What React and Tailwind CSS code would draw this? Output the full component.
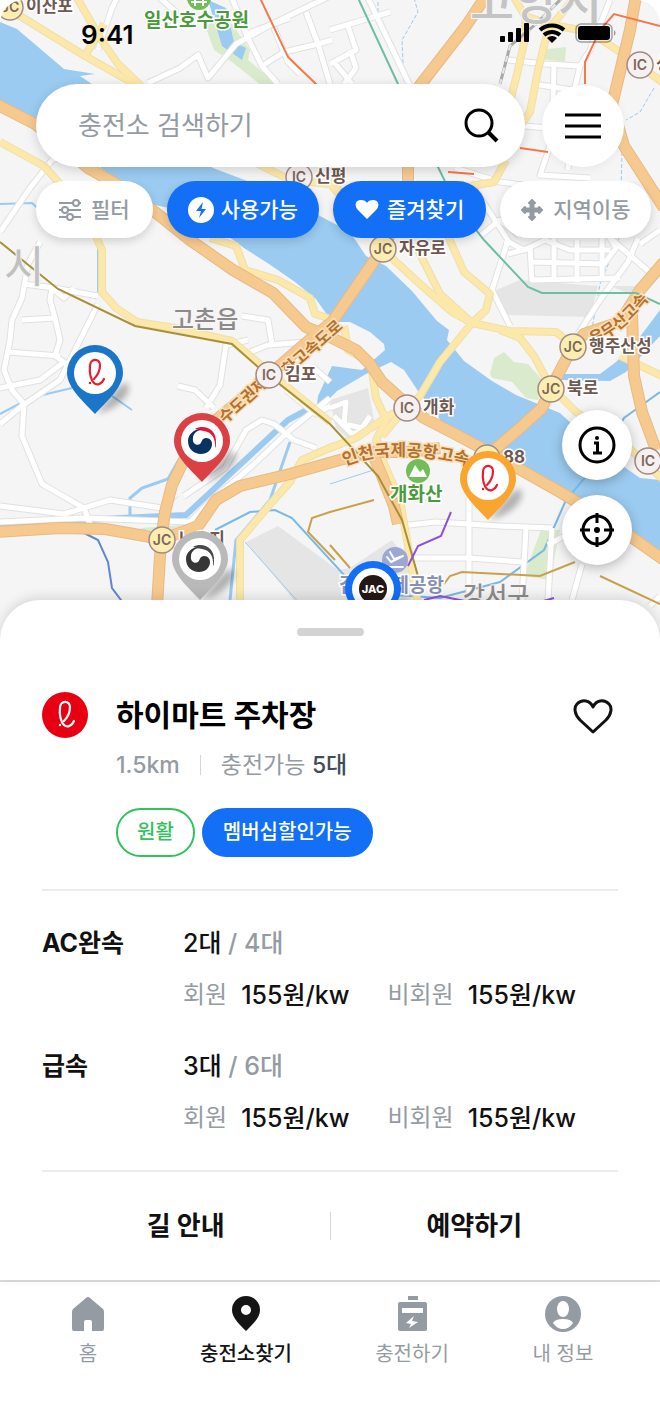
import { useState } from "react";

const ROADS = {
    // local streets
    white: [
        "M148 83 L180 68 L198 55 L208 78 L236 44 L270 25 L330 -4",
        "M160 -2 L176 12 L172 30", "M98 50 L112 8 L118 -4",
        "M232 -2 L246 34 L262 66 L278 84", "M262 66 L284 52 L318 44 L332 40",
        "M246 34 L290 18", "M274 28 L288 62 L300 74", "M306 12 L318 44 L330 84",
        "M330 30 L390 12", "M330 64 L356 50 L348 26", "M334 62 L352 84",
        "M350 50 L356 68 L344 84",
        "M367 -4 L412 90",
        "M508 60 L545 64 L580 66", "M554 66 L552 140 L540 175 L590 178", "M580 66 L572 100 L568 170",
        "M534 84 L572 90", "M525 126 L548 128", "M610 0 L590 50 L580 66",
        "M0 232 L30 188 L52 160", "M52 160 L62 156",
        "M455 168 L500 182 L530 186 L562 206", "M470 182 L508 240 L492 290 L510 326",
        "M505 240 L524 250 L545 240 L570 250 L610 250", "M508 254 L530 248 L532 280 L620 278",
        "M554 232 L554 282", "M577 240 L577 282", "M602 236 L602 280", "M532 262 L604 264 L616 248 L610 238 L654 276",
        "M638 238 L628 262 L600 300 L578 334", "M640 244 L660 230", "M480 236 L500 220 L520 236",
        "M40 242 L28 264 L22 298 L12 320 L10 340 L4 370 L12 390 L24 404 L22 436 L42 484 L84 508 L90 524",
        "M22 320 L55 318 L50 300 L52 288 L64 298 L74 288", "M24 284 L54 288 L98 296",
        "M55 318 L60 340 L55 356 L70 366", "M8 352 L60 356",
        "M98 304 L60 380 L22 406 L0 424", "M0 388 L40 380 L64 362",
        "M0 506 L64 514 L110 500 L162 508 L176 494", "M0 522 L84 518 L190 522 L212 500 L252 466 L290 430 L330 398",
        "M178 386 L195 390 L214 408", "M242 316 L268 320 L272 344",
        "M248 340 L226 345 L220 385 L206 408", "M184 496 L225 468 L246 430 L262 420 L274 424 L294 440 L316 448",
        "M250 352 L268 345 L306 342 L312 330", "M312 366 L330 382", "M286 390 L316 414 L330 406",
        "M330 408 L346 402 L344 424 L362 428 L370 416", "M334 416 L352 434 L366 430",
        "M400 526 L436 522 L500 526 L552 528", "M469 498 L469 600", "M412 558 L469 558 L522 562",
        "M526 528 L522 600", "M552 528 L548 600", "M548 545 L575 530", "M582 564 L572 600", "M650 606 L660 596",
    ],
    yellow: [
        "M0 8 L20 16 L85 56 L145 90", "M76 -4 L100 38 L118 64 L145 90", "M85 56 L104 24",
        "M0 142 L44 166 L60 184", "M94 232 L102 250 L102 292 L116 308 L137 322 L175 328 L232 341 L262 366 L330 422",
        "M258 164 L290 180 L330 184 L350 206", "M210 238 L236 246 L245 270 L278 280 L310 298 L315 314 L334 320",
        "M330 180 L372 225 L383 250 L420 284 L452 312 L472 323 L510 331 L556 332 L574 346",
        "M416 246 L440 294 L472 323", "M448 236 L464 272 L490 294 L486 310 L472 323 L440 362 L420 396 L404 410 L382 436",
        "M500 330 L520 338 L534 356 L550 386 L576 412 L620 440 L666 482",
        "M512 -6 L525 16 L526 34 L518 70 L508 110 L506 130", "M576 -4 L548 30 L538 70 L530 112 L520 126",
        "M525 16 L548 24 L590 32 L620 52", "M640 66 L662 82", "M506 160 L494 182 L470 186",
        "M334 446 L302 460 L290 482 L272 502 L240 540 L240 604", "M372 372 L376 398 L386 420 L376 440 L384 452",
        "M330 448 L356 438 L388 416 L404 408", "M376 440 L378 450 L400 500 L418 604",
        "M344 326 L348 350 L362 358", "M620 356 L662 376",
    ],
    orange: [
        "M-4 104 L35 124 L88 168 L120 186 L155 212 L190 240 L233 270 L273 293 L306 327 L330 337 L356 350 L370 364 L382 382 L402 400 L424 418 L455 434 L500 458 L560 492 L610 522 L664 560",
        "M486 -4 L466 26 L418 88", "M408 160 L408 200 L383 248 L332 322 L300 348 L240 400 L204 430 L184 460 L172 485 L165 512 L161 540 L157 606",
        "M636 -4 L630 30 L618 80 L612 105 L624 146 L664 208",
        "M-4 532 L60 528 L105 529 L145 536 L161 540 L198 526 L216 500 L240 486 L290 474 L336 461 L370 452 L410 452 L440 448",
        "M487 456 L520 428 L542 408 L552 386 L572 348 L584 334 L620 322 L640 290 L664 262",
        "M632 314 L634 376 L642 412 L656 450", "M372 452 L382 476 L394 506 L398 524",
    ],
};

const ROAD_STYLE = {
    white: { casing: "#e1e1e2", fill: "#ffffff", width: 5 },
    yellow: { casing: "#f0dfac", fill: "#fce8a9", width: 6 },
    orange: { casing: "#e8b985", fill: "#f6ca8f", width: 10 },
};

const JUNCTIONS = [
    { x: 10, y: 7, kind: "JC", label: "이산포" },
    { x: 299, y: 177, kind: "IC", label: "신평" },
    { x: 383, y: 249, kind: "JC", label: "자유로" },
    { x: 640, y: 65, kind: "IC", label: "성" },
    { x: 269, y: 375, kind: "IC", label: "김포" },
    { x: 573, y: 347, kind: "JC", label: "행주산성" },
    { x: 551, y: 389, kind: "JC", label: "북로" },
    { x: 407, y: 408, kind: "IC", label: "개화" },
    { x: 487, y: 458, kind: "JC", label: "88" },
    { x: 648, y: 461, kind: "IC", label: "" },
    { x: 162, y: 540, kind: "JC", label: "노오지" },
];

const CHARGERS = [
    { id: "ac", name: "AC완속", free: "2대", total: "4대", member: "155원/kw", guest: "155원/kw" },
    { id: "dc", name: "급속", free: "3대", total: "6대", member: "155원/kw", guest: "155원/kw" },
];

const LotteMark = ({ color }) => (
    <g fill="none" stroke={color} strokeLinecap="round">
        <path d="M-1 6 C4 1 5 -4 5 -8 C5 -15 -5 -15 -5 -7 C-6 0 -4 7 -1 10 C2 13 7 11 9 6" strokeWidth="2.2" />
        <circle cx="-5" cy="10" r="0.6" strokeWidth="1.2" />
    </g>
);

const GovMark = ({ top, bottom }) => (
    <g>
        <path d="M-7 -12 C2 -17 15 -12 14 2 C14 4 14 6 13 7 C14 -2 10 -9 2 -10 C-2 -11 -5 -11 -7 -12Z" fill={top} />
        <path d="M-1 -11 C-5 -13 -14 -8 -14 0 C-14 8 -8 13 -1 13 C5 13 10 9 10 3 C10 0 8 -3 4 -3 C0 -3 0 1 -2 3 C-5 5 -10 3 -9 -3 C-9 -7 -5 -11 -1 -11Z" fill={bottom} />
    </g>
);

const Pin = ({ x, y, color, children }) => (
    <g transform={`translate(${x} ${y})`}>
        <path d="M2 40 C12 28 24 10 32 10 C40 20 20 38 2 40Z" fill="#000" opacity="0.28" filter="url(#pinShadow)" />
        <path d="M0 41 C-9 31 -28 15 -28 0 A28 28 0 0 1 28 0 C28 15 9 31 0 41Z" fill={color} />
        <circle r="21" fill="#fff" />
        {children}
    </g>
);

const StationMap = () => (
    <svg
        className="absolute inset-0 h-full w-full"
        viewBox="0 0 660 640"
        preserveAspectRatio="xMidYMin slice"
        fontFamily='Inter, "Noto Sans CJK KR", sans-serif'
        role="img"
        aria-label="충전소 지도"
    >
        <defs>
            <filter id="pinShadow" x="-30%" y="-30%" width="160%" height="160%">
                <feGaussianBlur stdDeviation="3" />
            </filter>
            <path id="airportWay" d="M345 466 Q390 446 470 466" />
            <path id="mountainWay" d="M592 344 Q622 336 656 290" />
        </defs>
        <rect width="660" height="640" fill="#f5f5f5" />

        {/* grey blocks and parks */}
        <g fill="#e5e5e5">
            <path d="M496 290 L520 280 L598 286 L590 317 L506 315Z" />
            <path d="M246 542 L278 526 L338 570 L350 568 L392 540 L408 560 L412 604 L297 604Z" />
            <path d="M330 400 L368 388 L376 430 L350 440 L336 428Z" />
            <path d="M610 286 L650 286 L630 294Z" />
        </g>
        <g fill="#d9ebcc">
            <path d="M206 28 L214 16 L232 24 L250 50 L248 60 L280 86 L262 86 L232 62 L214 50Z" />
            <path d="M490 374 L494 358 L504 352 L514 362 L528 364 L546 384 L538 400 L526 398 L512 382 L492 378Z" />
            <path d="M541 530 L560 530 L550 580 L524 576Z" />
            <path d="M540 50 L566 47 L565 62 L542 59Z" />
            <path d="M140 528 L200 524 L186 536 L158 538Z" />
        </g>

        {/* rivers and canals */}
        <g fill="#9bcbf0">
            <path d="M0 22 L17 29 L64 69 L95 74 L80 76 L95 86 L213 168 L250 182 L320 216 L350 232 L366 256 L386 266 L412 291 L437 321 L449 330 L447 340 L464 361 L492 381 L516 395 L560 413 L600 450 L640 478 L660 480 L660 555 L610 522 L560 490 L520 470 L484 456 L464 444 L446 428 L432 408 L420 394 L404 370 L391 362 L366 374 L337 391 L316 412 L318 396 L332 366 L362 370 L385 350 L384 344 L370 332 L350 322 L332 322 L316 299 L295 282 L269 264 L244 248 L200 215 L155 205 L60 140 L0 104Z" />
            <path d="M660 310 L636 342 L616 362 L600 374 L560 374 L562 380 L610 381 L626 372 L660 336Z" />
            <path d="M208 0 L226 8 L234 42 L246 48 L242 60 L222 46Z" />
        </g>
        <g fill="none" stroke="#9bcbf0">
            <path d="M314 406 L288 420 L186 515 L120 518 L0 526" strokeWidth="6" />
            <path d="M130 517 L130 498 L142 488 L168 479 L180 458" strokeWidth="3" />
            <path d="M0 204 L32 203 L44 214" strokeWidth="2" />
            <path d="M92 232 L98 246 L98 292" strokeWidth="2" />
            <path d="M0 414 L30 398 L72 388 M112 396 L132 410" strokeWidth="2" />
            <path d="M290 442 L270 500 L236 540 L230 600" strokeWidth="3" />
            <path d="M378 2 L378 24 M414 -2 L418 12 L402 40 L404 82 M654 88 L640 112 L626 120 M622 152 L620 236 L600 284 L590 340" strokeWidth="1" strokeDasharray="4 2" />
            <path d="M330 484 L386 466 M245 542 L300 604" strokeWidth="1" />
        </g>
        <path d="M215 530 L250 512 L275 510 L292 518 L344 575 L380 594 L440 598 L500 582 L544 550 L566 500 L600 460 L624 418 L660 392" fill="none" stroke="#7ab8e5" strokeWidth="2" />
        <path d="M84 533 L98 540 L108 562 L112 588 L124 604" fill="none" stroke="#6387cf" strokeWidth="2" />

        {["white", "yellow", "orange"].map((kind) => (
            <g key={kind} fill="none" strokeLinejoin="round">
                {ROADS[kind].map((d) => (
                    <path key={d} d={d} stroke={ROAD_STYLE[kind].casing} strokeWidth={ROAD_STYLE[kind].width + 2} />
                ))}
                {ROADS[kind].map((d) => (
                    <path key={d} d={d} stroke={ROAD_STYLE[kind].fill} strokeWidth={ROAD_STYLE[kind].width} />
                ))}
            </g>
        ))}

        {/* subway and rail lines */}
        <g fill="none" strokeWidth="2">
            <path d="M0 242 L58 289 L135 326 L232 344 L258 367 L330 424 L378 476 L402 520 L418 576" stroke="#a89038" />
            <path d="M358 -2 L398 84 L438 167 L456 204 L484 240 L528 287 L542 293 L636 293 L660 304" stroke="#6cbf9f" />
            <path d="M260 -2 L288 57 L318 86 M585 84 L585 62 L600 30 L614 14 L660 26 M448 172 L474 174 M520 148 L548 152" stroke="#f5794a" />
            <path d="M451 512 L441 536 L418 546 L408 566 M424 600 L440 596 L480 604 M540 602 L554 598" stroke="#8d52dc" />
            <path d="M330 512 L374 500 M330 545 L350 568 M330 512 L312 518 L308 532 L335 560 M444 584 L450 576 L462 572 L540 576 L575 562 M600 576 L660 604" stroke="#c9a14c" />
            <path d="M564 -4 L536 24 L510 46 L500 84" stroke="#a9a9a9" strokeWidth="3" />
            <path d="M564 -4 L536 24 L510 46 L500 84" stroke="#e8e8e8" strokeDasharray="6 6" />
        </g>

        {/* place names */}
        <g fill="#a6a6a6" stroke="#f5f5f5" strokeWidth="2" paintOrder="stroke" fontWeight="500">
            <text x="470" y="19" fontSize="48" fill="#c4c4c4">고양시</text>
            <text x="4" y="283" fontSize="44" fontWeight="400" fill="#c0c0c0">시</text>
            <text x="172" y="328" fontSize="24" fill="#8f8a8a">고촌읍</text>
            <text x="463" y="604" fontSize="24" fill="#8f8a8a">강서구</text>
        </g>
        <g fill="#b5722f" stroke="#fbe0ba" strokeWidth="3" paintOrder="stroke" fontWeight="700" fontSize="16">
            <text transform="translate(225 424) rotate(-42)">수도권제</text>
            <text transform="translate(288 376) rotate(-41)">화고속도로</text>
            <text><textPath href="#mountainWay">운무산고속</textPath></text>
            <text fontSize="17"><textPath href="#airportWay">인천국제공항고속</textPath></text>
        </g>
        <g stroke="#fff" strokeWidth="3" paintOrder="stroke" fontWeight="700">
            <text x="144" y="27" fontSize="19" fill="#4b9a3b">일산호수공원</text>
            <text x="390" y="501" fontSize="19" fill="#4b9a3b">개화산</text>
            <text x="339" y="592" fontSize="19" fill="#8790b5">김포국제공항</text>
        </g>
        <circle cx="199" cy="-2" r="12" fill="#72bd58" />
        <path d="M195 6 V-4 M203 6 V-4 M191 2 H207" stroke="#fff" strokeWidth="2" />
        <circle cx="418" cy="471" r="12" fill="#72bd58" />
        <path d="M409 477 L415 465 L420 472 L423 469 L427 477Z" fill="#fff" />
        <circle cx="395" cy="560" r="13" fill="#9ca8d3" />
        <path d="M386 567 H403 M387 557 L391 562 L403 556 L394 559 L390 552" stroke="#fff" strokeWidth="2" fill="none" strokeLinecap="round" strokeLinejoin="round" />

        {JUNCTIONS.map(({ x, y, kind, label }) => (
            <g key={`${x}-${y}`} transform={`translate(${x} ${y})`}>
                <circle r="13" fill={kind === "JC" ? "#fbeeb0" : "#f6f1f1"} stroke="#a58a83" strokeWidth="1.5" />
                <text y="5" textAnchor="middle" fontSize="14" fontWeight="600" fill="#7f645c">{kind}</text>
                <text x="16" y="5" fontSize="17" fontWeight="700" fill="#705850" stroke="#fff" strokeWidth="3" paintOrder="stroke">{label}</text>
            </g>
        ))}

        <Pin x={95} y={373} color="#1c76c8"><LotteMark color="#ec1c2c" /></Pin>
        <Pin x={202} y={441} color="#db4144"><GovMark top="#e3173e" bottom="#0b3361" /></Pin>
        <Pin x={200} y={559} color="#b9b9b9"><GovMark top="#4a4a4a" bottom="#363636" /></Pin>
        <Pin x={488} y={479} color="#f9a52f"><LotteMark color="#ec1c2c" /></Pin>
        <Pin x={373} y={589} color="#136ff5">
            <circle r="14" fill="#231815" />
            <text y="4" textAnchor="middle" fontSize="11" fontWeight="800" fill="#fff">JAC</text>
        </Pin>
    </svg>
);

const StatusBar = () => (
    <div className="flex h-[84px] items-start justify-between pt-5 pr-[42px] pl-[81px] text-black">
        <span className="text-[26px] leading-[30px] font-semibold">9:41</span>
        <svg width="120" height="28" viewBox="0 0 120 28" aria-hidden="true">
            <g>
                <rect x="2" y="16" width="5" height="6" rx="1" />
                <rect x="10" y="12" width="5" height="10" rx="1" />
                <rect x="18" y="8" width="5" height="14" rx="1" />
                <rect x="26" y="3" width="5" height="19" rx="1" />
            </g>
            <g fill="none" stroke="#000" strokeWidth="4">
                <path d="M42 10 A18 18 0 0 1 66 10" />
                <path d="M46 15 A12 12 0 0 1 62 15" />
            </g>
            <path d="M49 18 A7 7 0 0 1 59 18 L54 23Z" />
            <rect x="78" y="4" width="36" height="18" rx="5" fill="none" stroke="#000" strokeOpacity="0.35" strokeWidth="1.5" />
            <rect x="80" y="6" width="32" height="14" rx="3" />
            <path d="M116 10 Q119 13 116 16Z" opacity="0.4" />
        </svg>
    </div>
);

const FilterBar = () => {
    const base = "flex h-[57px] shrink-0 items-center rounded-full text-[21px] leading-7 shadow-[0_3px_10px_rgba(0,0,0,0.16)]";
    return (
        <div className="mt-[14px] flex gap-[14px] overflow-hidden pb-6 pl-9">
            <button type="button" className={`${base} gap-[10px] bg-white px-[23px] font-medium text-[#949ba3]`}>
                <svg width="22" height="22" viewBox="0 0 22 22" fill="none" stroke="currentColor" strokeWidth="2">
                    <path d="M0 4 H14 M20 4 H22 M0 11 H3 M9 11 H22 M0 18 H8 M14 18 H22" />
                    <circle cx="17" cy="4" r="3" />
                    <circle cx="6" cy="11" r="3" />
                    <circle cx="11" cy="18" r="3" />
                </svg>
                필터
            </button>
            <button type="button" className={`${base} gap-[6px] bg-[#136ff5] px-[21px] font-medium text-white`}>
                <svg width="27" height="27" viewBox="0 0 27 27">
                    <circle cx="13" cy="14" r="13" fill="#fff" />
                    <path d="M15 6 L8 15 H13 L11 22 L18 13 H13.5Z" fill="#136ff5" />
                </svg>
                사용가능
            </button>
            <button type="button" className={`${base} gap-2 bg-[#136ff5] px-[22px] font-medium text-white`}>
                <svg width="24" height="21" viewBox="0 0 24 21" fill="#fff">
                    <path d="M12 20 L3 11 C-1 7 0 1 6 1 C9 1 11 2 12 4 C13 2 15 1 18 1 C24 1 25 7 21 11Z" />
                </svg>
                즐겨찾기
            </button>
            <button type="button" className={`${base} gap-[10px] bg-white px-[21px] font-medium text-[#949ba3]`}>
                <svg width="22" height="22" viewBox="0 0 22 22" fill="currentColor">
                    <path d="M11 1 L14 4 H12.5 V9.5 H18 V8 L21 11 L18 14 V12.5 H12.5 V18 H14 L11 21 L8 18 H9.5 V12.5 H4 V14 L1 11 L4 8 V9.5 H9.5 V4 H8Z" stroke="currentColor" strokeWidth="2" strokeLinejoin="round" />
                </svg>
                지역이동
            </button>
        </div>
    );
};

const ChargerRow = ({ name, free, total, member, guest }) => (
    <div className="flex text-[25px] leading-8">
        <h3 className="w-[141px] font-bold">{name}</h3>
        <div>
            <p className="font-medium text-[#949ba3]">
                <span className="text-[#111]">{free}</span> / {total}
            </p>
            <dl className="mt-5 flex text-[#949ba3]">
                <dt className="text-[24px]">회원</dt>
                <dd className="ml-[14px] font-medium text-[#111]">{member}</dd>
                <dt className="ml-[38px] text-[24px]">비회원</dt>
                <dd className="ml-[14px] font-medium text-[#111]">{guest}</dd>
            </dl>
        </div>
    </div>
);

const BottomNav = () => (
    <nav className="grid min-h-[132px] grid-cols-[176fr_140fr_192fr_110fr] border-t-2 border-[#dcdcdc] bg-white pt-[14px] pr-[42px] text-[20px] leading-7 text-[#949ba3]">
        <a href="#home" className="flex flex-col items-center gap-2">
            <svg width="36" height="36" viewBox="0 0 36 36" fill="currentColor">
                <path d="M18 1 Q19 1 20 2 L33 13 Q34 14 34 16 V33 Q34 35 32 35 H22 V26 Q22 24 20 24 H16 Q14 24 14 26 V35 H4 Q2 35 2 33 V16 Q2 14 3 13 L16 2 Q17 1 18 1Z" />
            </svg>
            홈
        </a>
        <a href="#stations" className="flex flex-col items-center gap-2 font-medium text-[#151515]">
            <svg width="36" height="36" viewBox="0 0 36 36">
                <path fillRule="evenodd" fill="currentColor" d="M18 0 A14 14 0 0 1 32 14 C32 22 24 29 18 35 C12 29 4 22 4 14 A14 14 0 0 1 18 0Z M18 9 A5 5 0 1 0 18 19 A5 5 0 1 0 18 9Z" />
            </svg>
            충전소찾기
        </a>
        <a href="#charge" className="flex flex-col items-center gap-2">
            <svg width="36" height="36" viewBox="0 0 36 36" fill="currentColor">
                <rect x="14" y="0" width="10" height="4" />
                <rect x="4" y="6" width="29" height="29" rx="2" />
                <rect x="8" y="12" width="21" height="5" fill="#fff" />
                <path d="M20 20 L12 27 L17 28 L15 32 L24 26 L18 25Z" fill="#fff" />
            </svg>
            충전하기
        </a>
        <a href="#me" className="flex flex-col items-center gap-2 whitespace-nowrap">
            <svg width="36" height="36" viewBox="0 0 36 36">
                <circle cx="18" cy="18" r="18" fill="currentColor" />
                <ellipse cx="18" cy="13" rx="6" ry="8" fill="#fff" />
                <path d="M8 27 Q10 23 18 23 Q26 23 28 27 Q24 33 18 33 Q12 33 8 27Z" fill="#fff" />
            </svg>
            내 정보
        </a>
    </nav>
);

const App = () => {
    const [query, setQuery] = useState("");
    const [liked, setLiked] = useState(false);

    return (
        <div className="min-h-screen bg-white font-[Inter,'Noto_Sans_CJK_KR',sans-serif] text-[#111]">
            <section className="relative overflow-hidden rounded-t-3xl pb-[75px]">
                <StationMap />
                <div className="relative">
                    <StatusBar />
                    <div className="flex items-center gap-[17px] px-9">
                        <form
                            className="flex h-[83px] min-w-0 flex-1 items-center rounded-full bg-white pr-[26px] pl-[42px] shadow-[0_3px_12px_rgba(0,0,0,0.16)]"
                            onSubmit={(e) => e.preventDefault()}
                        >
                            <input
                                type="text"
                                aria-label="충전소 검색하기"
                                placeholder="충전소 검색하기"
                                value={query}
                                onChange={(e) => setQuery(e.target.value)}
                                className="min-w-0 flex-1 text-[26px] leading-9 outline-none placeholder:text-[#949ba3]"
                            />
                            <button type="submit" aria-label="검색">
                                <svg width="36" height="36" viewBox="0 0 36 36" fill="none" stroke="#000" strokeWidth="3">
                                    <circle cx="16" cy="15" r="13" />
                                    <path d="M25 24 L34 33" strokeWidth="4" />
                                </svg>
                            </button>
                        </form>
                        <button type="button" aria-label="메뉴" className="flex size-[82px] shrink-0 items-center justify-center rounded-full bg-white shadow-[0_2px_10px_rgba(0,0,0,0.06)]">
                            <svg width="36" height="26" viewBox="0 0 36 26" stroke="#000" strokeWidth="3">
                                <path d="M0 2 H36 M0 13 H36 M0 24 H36" />
                            </svg>
                        </button>
                    </div>
                    <FilterBar />
                    <div className="mt-[148px] mr-7 flex flex-col items-end gap-[15px]">
                        <button type="button" aria-label="정보" className="flex size-[70px] items-center justify-center rounded-full bg-white shadow-[0_3px_12px_rgba(0,0,0,0.25)]">
                            <svg width="38" height="38" viewBox="0 0 38 38" fill="none" stroke="#000" strokeWidth="3">
                                <circle cx="19" cy="19" r="17" />
                                <path d="M16 17 H19.5 V27 M15 27 H24" />
                                <circle cx="19" cy="12" r="2" fill="#000" stroke="none" />
                            </svg>
                        </button>
                        <button type="button" aria-label="현재 위치" className="flex size-[70px] items-center justify-center rounded-full bg-white shadow-[0_3px_12px_rgba(0,0,0,0.25)]">
                            <svg width="38" height="38" viewBox="0 0 38 38" fill="none" stroke="#000" strokeWidth="3">
                                <circle cx="19" cy="19" r="14" />
                                <path d="M19 2 V12 M19 26 V36 M2 19 H12 M26 19 H36" />
                                <circle cx="19" cy="19" r="3" fill="#000" stroke="none" />
                            </svg>
                        </button>
                    </div>
                </div>
            </section>

            <main className="relative -mt-10 rounded-t-[40px] bg-white px-[42px] pt-7 shadow-[0_-3px_12px_rgba(0,0,0,0.12)]">
                <div className="mx-auto h-2 w-[67px] rounded-full bg-[#d3d3d3]" />

                <div className="mt-14 flex items-start">
                    <svg width="46" height="46" viewBox="-23 -23 46 46" aria-hidden="true">
                        <circle r="23" fill="#e60012" />
                        <LotteMark color="#fff" />
                    </svg>
                    <div className="ml-7 flex-1">
                        <h2 className="text-[30px] leading-[46px] font-bold text-black">하이마트 주차장</h2>
                        <p className="mt-[9px] flex items-center text-[23px] leading-9 text-[#949ba3]">
                            <span className="font-medium">1.5km</span>
                            <span className="mx-5 h-5 w-px bg-[#d3d6d9]" />
                            <span>충전가능 <span className="font-medium text-[#424c58]">5대</span></span>
                        </p>
                        <div className="mt-[25px] flex gap-[7px] text-[20px] leading-[45px] font-medium">
                            <span className="rounded-full border-2 border-[#2fc35a] px-[19px] text-[#2fc35a]">원활</span>
                            <span className="rounded-full border-2 border-[#136ff5] bg-[#136ff5] px-[19px] text-white">멤버십할인가능</span>
                        </div>
                    </div>
                    <button type="button" aria-label="즐겨찾기" aria-pressed={liked} onClick={() => setLiked(!liked)} className="mt-[7px] mr-[5px]">
                        <svg width="40" height="36" viewBox="0 0 40 36" fill={liked ? "#111" : "none"} stroke="#111" strokeWidth="3" strokeLinejoin="round">
                            <path d="M20 33 L7 21 C1 15 1 8 4 5 C9 0 17 1 20 8 C23 1 31 0 36 5 C39 8 39 15 33 21Z" />
                        </svg>
                    </button>
                </div>

                <div className="mt-8 flex flex-col gap-[39px] border-y-2 border-[#ececee] pt-9 pb-9">
                    {CHARGERS.map((c) => (
                        <ChargerRow key={c.id} {...c} />
                    ))}
                </div>

                <div className="flex items-center py-9 text-[26px] leading-9 font-bold">
                    <button type="button" className="flex-1">길 안내</button>
                    <span className="h-7 w-px bg-[#d3d6d9]" />
                    <button type="button" className="flex-1">예약하기</button>
                </div>
            </main>
            <BottomNav />
        </div>
    );
};

export default App;
